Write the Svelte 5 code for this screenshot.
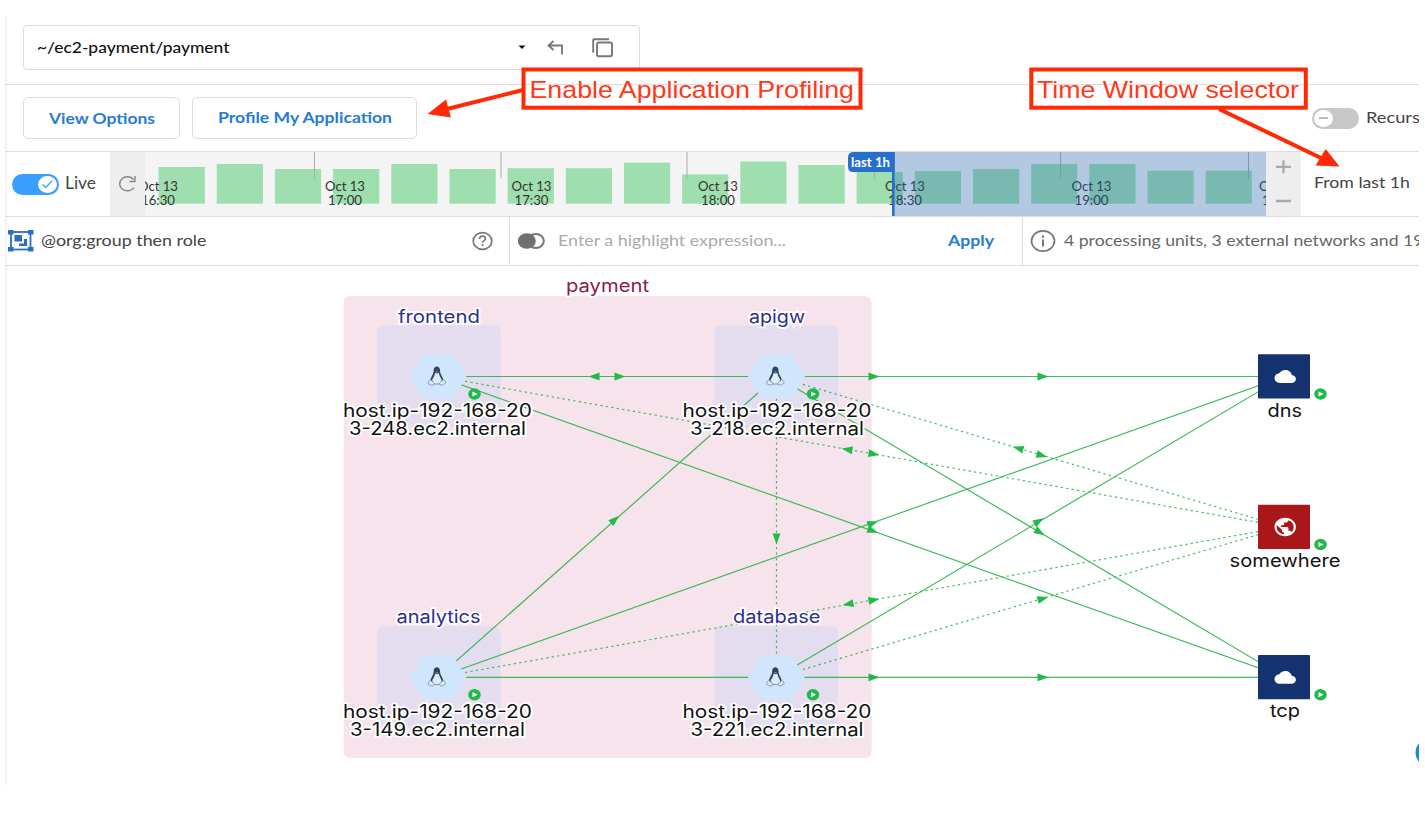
<script>
  const barTops = [167, 164, 169, 169, 164, 169, 168.2, 168.2, 162.6, 174.4, 161.5, 165, 172, 171, 169, 164, 164, 170.7, 170.7];
  const bars = barTops.map((t, i) => ({ x: 13.6 + i * 58.17, y: t - 152, h: 203.7 - t }));
  const ticks = [169.5, 356, 542, 729.5, 915.7, 1103.5];
  const times = [
    [13, '16:30'], [200, '17:00'], [386.5, '17:30'], [573, '18:00'],
    [760, '18:30'], [946.5, '19:00'], [1134, '19:30']
  ];

  const solid = [
    [438, 376.5, 776.5, 376.5], [776.5, 376.5, 1284, 376.5],
    [438, 376.5, 1284, 677], [776.5, 376.5, 1284, 677],
    [438, 677.3, 776.5, 376.5], [438, 677.3, 1284, 376.5],
    [438, 677.3, 1284, 677.3], [776.5, 677.3, 1284, 376.5]
  ];
  const dotted = [
    [438, 376.5, 1284, 527], [776.5, 376.5, 1284, 527],
    [438, 677.3, 1284, 527], [776.5, 677.3, 1284, 527],
    [776.5, 376.5, 776.5, 677.3]
  ];
  const arrows = [
    [594, 376.5, 180], [620, 376.5, 0], [874, 376.5, 0], [1043, 376.5, 0],
    [847, 449.5, 190], [874, 454, 10], [1018, 448.3, 196.5], [1042, 455.5, 16.5],
    [873, 531, 19.5], [1040, 532.5, 30.6], [873, 523, -19.5], [1039, 521, -30.6],
    [615, 519.5, -41.6], [776.5, 539, 90], [848, 604, 170], [874, 600, -10],
    [1043, 598.5, -16.5], [874, 677.3, 0], [1043, 677.3, 0]
  ];

  const hosts = [
    { x: 438, y: 376.5, bx: 377, name: 'frontend', nx: 398, nw: 82, ax: 343, aw: 189, b: '3-248.ec2.internal', bxx: 349, bw: 177 },
    { x: 776.5, y: 376.5, bx: 714.5, name: 'apigw', nx: 749, nw: 56, ax: 682.5, aw: 189, b: '3-218.ec2.internal', bxx: 690, bw: 174 },
    { x: 438, y: 677.3, bx: 377, name: 'analytics', nx: 396.5, nw: 84, ax: 343, aw: 189, b: '3-149.ec2.internal', bxx: 350, bw: 175 },
    { x: 776.5, y: 677.3, bx: 714.5, name: 'database', nx: 733, nw: 87.5, ax: 682.5, aw: 189, b: '3-221.ec2.internal', bxx: 690.5, bw: 173 }
  ];
  const nets = [
    { y: 376.5, name: 'dns', x: 1267.5, w: 34.5, fill: '#143370' },
    { y: 527, name: 'somewhere', x: 1229.5, w: 111, fill: '#a91719', globe: true },
    { y: 677.3, name: 'tcp', x: 1270, w: 30, fill: '#143370' }
  ];
  const badges = [[474.5, 394], [813, 394], [1320.5, 394], [1320.5, 544.5], [474.5, 694.7], [813, 694.7], [1320.5, 694.7]];
</script>

{#snippet label(text, width, cls)}
  <svg class="label {cls}" {width} height="22">
    <text x="0" y="16.300" textLength={width} lengthAdjust="spacingAndGlyphs">{text}</text>
  </svg>
{/snippet}

<div class="page">
  <div class="window">
    <div class="row path-row">
      <div class="path-box">
        {@render label('~/ec2-payment/payment', 192.5, 'ink')}
        <svg class="caret" width="8" height="5"><path d="M.5.5h7L4 4z" fill="#111" /></svg>
        <svg class="back" width="18" height="18" viewBox="0 0 18 18" fill="none" stroke="#777" stroke-width="1.800">
          <path d="M6.500 2 1.500 6.500l5 4.500M1.500 6.500h13.500V15.500" />
        </svg>
        <svg class="copy" width="22" height="20" viewBox="0 0 22 20" fill="none" stroke="#777" stroke-width="1.900">
          <path d="M1.200 14.500V2.500Q1.200 1.200 2.500 1.200H17" /><rect x="5" y="4.500" width="15" height="13.800" rx="1.700" />
        </svg>
      </div>
    </div>

    <div class="row actions">
      <button class="view">{@render label('View Options', 106, 'link low')}</button>
      <button class="profile">{@render label('Profile My Application', 174, 'link')}</button>
      <div class="recursive">
        <span class="switch off"><i><b></b></i></span>
        {@render label('Recursive', 77, 'dark')}
      </div>
    </div>

    <div class="row timeline">
      <div class="live">
        <span class="switch on"><i><svg width="19" height="18" viewBox="0 0 19 18"><path d="m4.500 9.500 3.200 3 6.500-6.800" fill="none" stroke="#3fa5ff" stroke-width="1.400" /></svg></i></span>
        {@render label('Live', 31, 'dark big')}
      </div>
      <div class="side refresh">
        <svg width="20" height="18" viewBox="0 0 20 18" fill="none" stroke="#858585" stroke-width="1.400">
          <path d="M16.600 4.500A7.800 7 0 1 0 17 12.600M18 1v5.500H12.500" />
        </svg>
      </div>
      <svg class="chart" width="1121" height="64" viewBox="0 0 1121 64">
        {#each bars as b}<rect x={b.x} y={b.y} width="46.200" height={b.h} fill="#9fdeae" />{/each}
        {#each ticks as x}<path d="M{x} 0V26.500" stroke="#aaa" />{/each}
        {#each times as [x, t]}
          <text x={x - 20} y="38.800" textLength="40" lengthAdjust="spacingAndGlyphs">Oct 13</text>
          <text x={x - 17} y="53.400" textLength="34" lengthAdjust="spacingAndGlyphs">{t}</text>
        {/each}
        <rect x="748.500" width="372.500" height="64" fill="#1d67b8" opacity=".3" />
        <rect x="747" width="2.600" height="64" fill="#266fcd" />
        <path d="M708 0H749.600V20H708Q703 20 703 14V6Q703 0 708 0Z" fill="#266fcd" />
        <text class="tag" x="706" y="14.500" textLength="39" lengthAdjust="spacingAndGlyphs">last 1h</text>
      </svg>
      <div class="side zoom">
        <svg width="35" height="64" viewBox="0 0 35 64" stroke="#aaa" stroke-width="2.300">
          <path d="M10 14.800h15M17.500 8.300v13M10 49h15" />
        </svg>
      </div>
      <div class="from">{@render label('From last 1h', 96, 'dark')}</div>
    </div>

    <div class="row filters">
      <div class="group">
        <svg width="26" height="24" viewBox="0 0 26 24">
          <rect x="3" y="3" width="19.500" height="17.500" fill="none" stroke="#286fcb" stroke-width="1.800" />
          <path d="M0 1h5.500v4.500H0zM20 1h5.500v4.500H20zM0 18h5.500v4.500H0zM20 18h5.500v4.500H20zM6.500 6h7.500v6.500H6.500zM16 10h3v7h-8v-2.500h5z" fill="#286fcb" />
        </svg>
        {@render label('@org:group then role', 165.5, 'dark')}
        <svg class="help" width="21" height="20" viewBox="0 0 21 20" fill="none" stroke="#777" stroke-width="1.700">
          <ellipse cx="10.500" cy="10" rx="9.300" ry="8.400" /><path d="M7.500 8c0-3.800 6-3.700 6-.5 0 2-3 2.200-3 4.300M10.500 13v2" />
        </svg>
      </div>
      <div class="highlight">
        <svg width="29" height="18" viewBox="0 0 29 18">
          <ellipse cx="18.800" cy="9" rx="8" ry="7" fill="#fff" stroke="#777" stroke-width="2" /><ellipse cx="9.800" cy="9" rx="9" ry="7.800" fill="#707070" />
        </svg>
        {@render label('Enter a highlight expression...', 228, 'hint')}
        {@render label('Apply', 46, 'link apply')}
      </div>
      <div class="summary">
        <svg width="26" height="24" viewBox="0 0 26 24" fill="none" stroke="#777" stroke-width="1.700">
          <ellipse cx="13" cy="12" rx="11.500" ry="10.100" /><path d="M13 10.500v7M13 6.500v2.200" stroke-width="2" />
        </svg>
        {@render label('4 processing units, 3 external networks and 19', 359.5, 'grey')}
      </div>
    </div>

    <svg class="graph" width="1414" height="519" viewBox="5 266 1414 519">
      <rect x="343.700" y="296" width="528" height="462" rx="7" fill="#f7e3ec" />
      {#each hosts as h}<rect x={h.bx} y={h.y - 51} width="123.700" height="102" rx="6" fill="#e3ddef" />{/each}
      <g stroke="#1fb141" stroke-width="1.200" opacity=".85">
        {#each solid as [a, b, c, d]}<path d="M{a} {b}L{c} {d}" />{/each}
        {#each dotted as [a, b, c, d]}<path d="M{a} {b}L{c} {d}" stroke-dasharray="2.200 3.300" />{/each}
      </g>
      {#each arrows as [x, y, r]}<path d="M-5.500-3.900 5.500 0-5.500 3.900Z" fill="#20ba48" transform="translate({x} {y}) rotate({r})" />{/each}

      {#each hosts as h}
        <g transform="translate({h.x} {h.y})">
          <path d="M-28.500 0-15-22H15L28.300 0 15 22H-15Z" fill="#cfe6fc" />
          <g transform="translate(-1 -.3)">
            <path d="M-3.300-6C-3.300-11 3-11 3-6c0 4 2.200 5.500 3.300 9.500L4.500 8h-9.500L-6.600 3.500C-5.500-.5-3.300-2-3.300-6Z" fill="#33425b" />
            <path d="M-1.700-3.500Q0-2 1.700-3.500 2.500 0 4.700 3.500 4.500 6 2.500 7.600h-5Q-4.500 6-4.900 3.500-2.500 0-1.700-3.500Z" fill="#dcebfa" />
            <path d="M-6.500 3.500-2.500 7Q-3 9.500-5.300 9L-9 7.500-8 4.500ZM6.200 3.500 2.300 7Q2.800 9.500 5 9l3.800-2.200L7.800 4.500Z" fill="#dbe7f5" stroke="#8090a6" stroke-width=".8" />
            <path d="M-1.600-4.700H1.500L0-3.400Z" fill="#9dabc0" />
          </g>
        </g>
      {/each}
      {#each nets as n}
        <g transform="translate(1284 {n.y})">
          <rect x="-26" y="-22.300" width="52" height="44.300" rx=".8" fill={n.fill} />
          {#if n.globe}
            <g transform="translate(1.200 0) scale(1.070 .92)"><path transform="translate(-12 -12)" fill="#fff" d="M12 2C6.480 2 2 6.480 2 12s4.480 10 10 10 10-4.480 10-10S17.520 2 12 2zm-1 17.930c-3.950-.49-7-3.850-7-7.930 0-.62.080-1.210.21-1.790L9 15v1c0 1.100.9 2 2 2v1.930zm6.900-2.540c-.26-.81-1-1.390-1.900-1.390h-1v-3c0-.55-.45-1-1-1H8v-2h2c.55 0 1-.45 1-1V7h2c1.100 0 2-.9 2-2v-.41c2.930 1.190 5 4.060 5 7.410 0 2.080-.8 3.970-2.100 5.390z" /></g>
          {:else}
            <path transform="translate(-9.500 -9.600) scale(.893 .8)" fill="#fff" d="M19.350 10.040C18.670 6.590 15.640 4 12 4 9.110 4 6.600 5.640 5.350 8.040 2.340 8.360 0 10.910 0 14c0 3.310 2.690 6 6 6h13c2.760 0 5-2.240 5-5 0-2.640-2.050-4.780-4.650-4.960z" />
          {/if}
        </g>
        <text class="node" x={n.x} y={n.y + 40} textLength={n.w} lengthAdjust="spacingAndGlyphs">{n.name}</text>
      {/each}
      {#each badges as [x, y]}
        <ellipse cx={x} cy={y} rx="6.300" ry="5.700" fill="#20ba4b" /><path d="M{x - 2} {y - 2.600} {x + 3} {y} {x - 2} {y + 2.600}Z" fill="#fff" />
      {/each}
      <text class="node payment" x="566" y="292.400" textLength="83" lengthAdjust="spacingAndGlyphs">payment</text>
      {#each hosts as h}
        <text class="node role" x={h.nx} y={h.y - 54} textLength={h.nw} lengthAdjust="spacingAndGlyphs">{h.name}</text>
        <text class="node" x={h.ax} y={h.y + 40.3} textLength={h.aw} lengthAdjust="spacingAndGlyphs">host.ip-192-168-20</text>
        <text class="node" x={h.bxx} y={h.y + 58.6} textLength={h.bw} lengthAdjust="spacingAndGlyphs">{h.b}</text>
      {/each}
      <ellipse cx="1425" cy="752.500" rx="9.500" ry="12" fill="#2389c4" />
    </svg>
  </div>

  <svg class="notes" width="1425" height="200">
    <g fill="none" stroke="#ff2a05" stroke-width="4">
      <rect x="523.500" y="69.500" width="337" height="38.200" /><rect x="1031.300" y="69.500" width="274.500" height="38.200" />
      <path d="M523 90 445 109.500M1219 109 1322 158.500" />
    </g>
    <path d="M427.500 114 446 99.500 451 117.500ZM1339.500 166.500 1325.700 149 1315.500 165.500Z" fill="#ff2a05" />
    <text x="529.500" y="98" textLength="324.500" lengthAdjust="spacingAndGlyphs">Enable Application Profiling</text>
    <text x="1037" y="98" textLength="262" lengthAdjust="spacingAndGlyphs">Time Window selector</text>
  </svg>
</div>

<style>
  :global(body) { background: #fff; overflow: hidden; }
  .page { position: relative; width: 1425px; height: 813px; overflow: hidden; padding: 16px 6px 28px 5px; box-sizing: border-box; font-family: Lato, sans-serif; }
  .window { width: 1414px; height: 769px; overflow: hidden; box-shadow: inset 3px 0 3px -2px #e9e9e9; }
  svg { display: block; flex: none; }
  .row { display: flex; box-sizing: border-box; border-bottom: 1.500px solid #ddd; width: 1414px; }
  .row > * { flex: none; }
  .path-row { height: 69px; padding: 9px 0 0 18px; }
  .path-box { box-sizing: border-box; width: 617px; height: 45px; border: 1.500px solid #dadada; border-radius: 4px; display: flex; align-items: center; padding-left: 13px; }
  .caret { margin-left: 288px; }
  .back { margin: 1px 0 0 21px; }
  .copy { margin-left: 27px; }
  .actions { height: 67px; padding: 12px 0 0 18px; align-items: flex-start; }
  button { box-sizing: border-box; height: 42px; border: 1.500px solid #ddd; border-radius: 5px; background: #fff; padding: 0; display: flex; align-items: center; justify-content: center; font-family: inherit; }
  .view { width: 157px; }
  .profile { width: 225px; margin-left: 12px; }
  .recursive { display: flex; align-items: center; margin-left: 895px; height: 42px; gap: 7px; }
  .switch { width: 47px; height: 21px; border-radius: 11px; flex: none; display: flex; align-items: center; box-sizing: border-box; padding: 0 2px; }
  .switch i { width: 19px; height: 17px; border-radius: 50%; background: #fff; display: flex; align-items: center; justify-content: center; }
  .switch b { width: 9px; height: 2px; background: #bbb; }
  .off { background: #c7c7c7; }
  .on { background: #389fff; justify-content: flex-end; }
  .timeline { height: 65px; }
  .live { width: 105px; display: flex; align-items: center; gap: 6px; padding-left: 7px; box-sizing: border-box; }
  .side { width: 35px; background: #eee; display: flex; align-items: center; justify-content: center; }
  .refresh svg { margin-right: 1px; }
  .chart { background: #f4f4f4; font-size: 13px; fill: #333; }
  .tag { fill: #fff; font-weight: 700; }
  .from { display: flex; align-items: center; padding: 0 0 3px 13px; }
  .filters { height: 49px; }
  .group { display: flex; align-items: center; width: 505px; padding-left: 3px; gap: 7px; border-right: 1.500px solid #ddd; box-sizing: border-box; }
  .help { margin-left: 258px; }
  .highlight { display: flex; align-items: center; width: 513px; padding-left: 7px; gap: 12px; border-right: 1.500px solid #ddd; box-sizing: border-box; }
  .apply { margin-left: 150px; }
  .summary { display: flex; align-items: center; padding-left: 7px; gap: 8px; }
  .label { font-size: 16px; overflow: visible; }
  .big { font-size: 17.500px; }
  .ink { fill: #111; font-weight: 500; }
  .dark { fill: #444; }
  .grey { fill: #666; }
  .hint { fill: #aaa; }
  .link { fill: #277bd5; font-weight: 700; }
  .low { position: relative; top: 1px; }
  .node { font: 18px Inter, sans-serif; fill: #111; stroke: #fff; stroke-width: 3.500px; paint-order: stroke; stroke-linejoin: miter; stroke-miterlimit: 10; }
  .payment { fill: #8c1c4c; }
  .role { fill: #2d308d; }
  .notes { position: absolute; left: 0; top: 0; pointer-events: none; font: 24px "Liberation Sans", sans-serif; fill: #ff3818; }
</style>
